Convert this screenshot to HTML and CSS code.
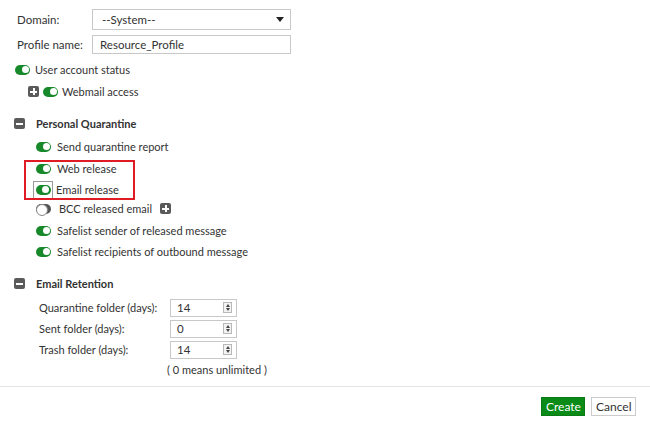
FILE: index.html
```html
<!DOCTYPE html>
<html>
<head>
<meta charset="utf-8">
<link rel="stylesheet" href="styles.css">
</head>
<body>
<div class="form">
  <div class="field-row first">
    <span class="label">Domain:</span>
    <div class="select"><span>--System--</span><span class="caret"></span></div>
  </div>
  <div class="field-row">
    <span class="label">Profile name:</span>
    <div class="input">Resource_Profile</div>
  </div>

  <div class="row lvl0 r-user"><span class="toggle on"></span><span>User account status</span></div>
  <div class="row lvl1"><span class="ico plus"></span><span class="toggle on"></span><span>Webmail access</span></div>

  <div class="section">
    <div class="head"><span class="ico minus"></span><span class="htext">Personal Quarantine</span></div>
    <div class="row sub r-send"><span class="toggle on"></span><span>Send quarantine report</span></div>
    <div class="row sub r-web"><span class="toggle on"></span><span>Web release</span></div>
    <div class="row sub r-email"><span class="focus"><span class="toggle on"></span></span><span>Email release</span></div>
    <div class="row sub r-bcc"><span class="toggle off"></span><span class="bcc">BCC released email</span><span class="ico plus"></span></div>
    <div class="row sub r-sender"><span class="toggle on"></span><span>Safelist sender of released message</span></div>
    <div class="row sub"><span class="toggle on"></span><span>Safelist recipients of outbound message</span></div>
    <div class="annot"></div>
  </div>

  <div class="section ret">
    <div class="head"><span class="ico minus"></span><span class="htext">Email Retention</span></div>
    <div class="num-row first-num"><span class="nlabel">Quarantine folder (days):</span><div class="num"><span>14</span><span class="spin"><i class="up"></i><i class="dn"></i></span></div></div>
    <div class="num-row"><span class="nlabel">Sent folder (days):</span><div class="num"><span>0</span><span class="spin"><i class="up"></i><i class="dn"></i></span></div></div>
    <div class="num-row"><span class="nlabel">Trash folder (days):</span><div class="num"><span>14</span><span class="spin"><i class="up"></i><i class="dn"></i></span></div></div>
    <div class="note">( 0 means unlimited )</div>
  </div>
</div>
<div class="footer">
  <button class="btn create">Create</button>
  <button class="btn cancel">Cancel</button>
</div>
</body>
</html>
```
FILE: styles.css
```css
* { box-sizing: border-box; }
body {
  margin: 0;
  font-family: Lato, "Open Sans", sans-serif;
  font-size: 11px;
  color: #333;
  background: #fff;
}
.form { padding: 9px 0 0 0; height: 387px; border-bottom: 1px solid #e4e4e4; }
.field-row { display: flex; align-items: center; height: 21px; margin-bottom: 4px; padding-left: 17px; font-size: 11.5px; }
.field-row .label { width: 75px; }
.select {
  width: 199px; height: 21px; border: 1px solid #c8c8c8;
  display: flex; align-items: center; justify-content: space-between;
  padding: 0 6px 0 9px;
}
.caret { width: 0; height: 0; border-left: 4px solid transparent; border-right: 4px solid transparent; border-top: 5px solid #222; }
.input { width: 199px; height: 19px; border: 1px solid #c8c8c8; display: flex; align-items: center; padding-left: 7px; }

.row { display: flex; align-items: center; height: 21px; gap: 5px; }
.r-user { margin-top: 4px; }
.lvl0 { padding-left: 15px; }
.lvl1 { padding-left: 28px; gap: 4px; margin-top: 1px; }
.sub { padding-left: 36px; gap: 6px; }

.toggle { position: relative; display: inline-block; width: 15px; height: 10px; border-radius: 5px; flex: none; }
.toggle.on { background: #17892a; }
.toggle.on::after { content: ""; position: absolute; right: 1.5px; top: 1.5px; width: 7px; height: 7px; border-radius: 50%; background: #fff; }
.toggle.off { background: #555; }
.toggle.off::after { content: ""; position: absolute; left: 0; top: 0; width: 10px; height: 10px; border-radius: 50%; background: #fff; border: 1px solid #888; }

.focus { display: inline-flex; align-items: center; justify-content: center; width: 20px; height: 18px; border: 1px solid #999; margin-left: -3px; margin-right: -3px; }

.ico { position: relative; display: inline-block; width: 11px; height: 11px; border-radius: 2px; background: #5a5a5a; flex: none; }
.ico::before { content: ""; position: absolute; left: 2px; top: 4.5px; width: 7px; height: 2px; background: #fff; }
.ico.plus::after { content: ""; position: absolute; left: 4.5px; top: 2px; width: 2px; height: 7px; background: #fff; }

.section { position: relative; }
.head { display: flex; align-items: center; height: 21px; padding-left: 14px; gap: 11px; margin-top: 11px; }
.htext { font-weight: bold; color: #333; }
.r-send { margin-top: 2px; }
.r-web { margin-top: 1px; }
.r-bcc { margin-top: -2px; }
.r-sender { margin-top: 1px; }
.bcc { margin-left: 2px; margin-right: 2px; }
.ret .head { margin-top: 11px; }

.annot { position: absolute; left: 24px; top: 47px; width: 111px; height: 40px; border: 2px solid #e01b24; pointer-events: none; }

.num-row { display: flex; align-items: center; height: 21px; padding-left: 39px; }
.first-num { margin-top: 3px; }
.nlabel { width: 131px; }
.num { width: 67px; height: 18px; border: 1px solid #c8c8c8; display: flex; align-items: center; justify-content: space-between; padding: 0 4px 0 6px; font-size: 11.5px; }
.spin { position: relative; width: 9px; height: 11px; border: 1px solid #b8b8b8; background: #f3f3f3; display: flex; flex-direction: column; align-items: center; justify-content: center; gap: 1px; }
.spin i { display: block; width: 0; height: 0; border-left: 2.5px solid transparent; border-right: 2.5px solid transparent; }
.spin .up { border-bottom: 3px solid #444; }
.spin .dn { border-top: 3px solid #444; }
.note { padding-left: 167px; height: 18px; display: flex; align-items: center; }

.footer { display: flex; justify-content: flex-end; gap: 6px; padding: 10px 14px 0 0; }
.btn { font-family: Lato, sans-serif; font-size: 12px; height: 19px; padding: 0 4px; border-radius: 0; }
.create { background: #0a8a16; color: #fff; border: 1px solid #0a7a14; width: 44px; }
.cancel { background: #fff; color: #333; border: 1px solid #ccc; width: 45px; }
```
